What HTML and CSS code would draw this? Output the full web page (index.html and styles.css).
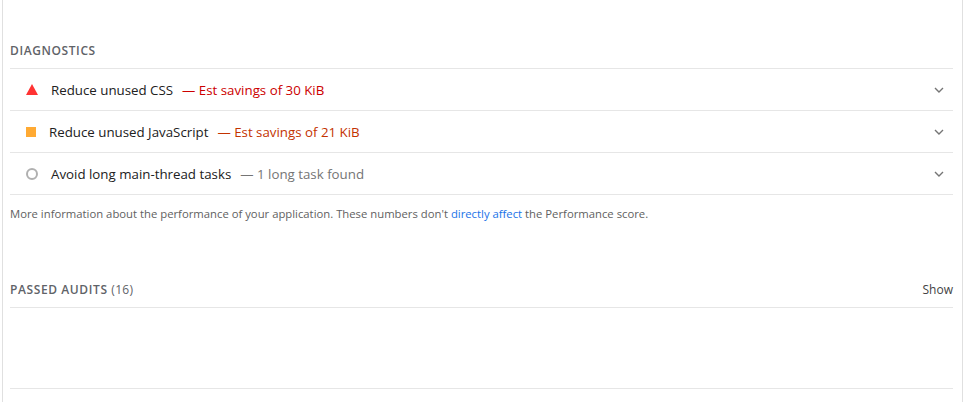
FILE: index.html
```html
<!DOCTYPE html>
<html>
<head>
<meta charset="utf-8">
<link rel="stylesheet" href="styles.css">
</head>
<body>
<div class="panel">
  <section class="group diag">
    <div class="group-header">Diagnostics</div>
    <div class="audit">
      <span class="icon"><svg width="12" height="11" viewBox="0 0 12 11"><polygon points="6,0 12,11 0,11" fill="#ff3333"/></svg></span>
      <span class="title">Reduce unused CSS</span>
      <span class="sep fail">— Est savings of 30 KiB</span>
      <span class="chev"><svg width="10" height="6" viewBox="0 0 10 6"><polyline points="1,1 5,5 9,1" fill="none" stroke="#757575" stroke-width="1.4"/></svg></span>
    </div>
    <div class="audit">
      <span class="icon icon-narrow"><span class="square"></span></span>
      <span class="title">Reduce unused JavaScript</span>
      <span class="sep avg">— Est savings of 21 KiB</span>
      <span class="chev"><svg width="10" height="6" viewBox="0 0 10 6"><polyline points="1,1 5,5 9,1" fill="none" stroke="#757575" stroke-width="1.4"/></svg></span>
    </div>
    <div class="audit">
      <span class="icon"><span class="circle"></span></span>
      <span class="title">Avoid long main-thread tasks</span>
      <span class="sep info">— 1 long task found</span>
      <span class="chev"><svg width="10" height="6" viewBox="0 0 10 6"><polyline points="1,1 5,5 9,1" fill="none" stroke="#757575" stroke-width="1.4"/></svg></span>
    </div>
    <p class="desc">More information about the performance of your application. These numbers don't <a href="#">directly affect</a> the Performance score.</p>
  </section>
  <section class="group passed">
    <div class="group-header row">
      <span>Passed audits <span class="count">(16)</span></span>
      <span class="show">Show</span>
    </div>
    <div class="empty"></div>
  </section>
</div>
</body>
</html>
```
FILE: styles.css
```css
html, body {
  margin: 0;
  padding: 0;
  background: #fff;
}
body {
  font-family: "Open Sans", "Noto Sans", sans-serif;
  color: #212121;
}
.panel {
  margin-left: 2px;
  width: 961px;
  height: 402px;
  border-left: 1px solid #e0e0e0;
  border-right: 1px solid #e0e0e0;
  box-sizing: border-box;
  padding: 39px 9px 0 7px;
}
.group-header {
  font-size: 12px;
  font-weight: 600;
  letter-spacing: 0.6px;
  text-transform: uppercase;
  color: #5f6368;
  height: 30px;
  line-height: 24px;
  border-bottom: 1px solid #e6e6e6;
  box-sizing: border-box;
}
.group-header.row {
  display: flex;
  justify-content: space-between;
}
.count {
  font-weight: 400;
  letter-spacing: 0.3px;
}
.show {
  text-transform: none;
  font-weight: 400;
  letter-spacing: 0;
  color: #424242;
}
.audit {
  display: flex;
  align-items: center;
  height: 42px;
  border-bottom: 1px solid #e6e6e6;
  box-sizing: border-box;
  font-size: 13.3px;
}
.icon {
  width: 41px;
  display: flex;
  justify-content: center;
  padding-left: 2px;
  box-sizing: border-box;
}
.icon-narrow {
  width: 39px;
  justify-content: flex-start;
  padding-left: 16px;
}
.square {
  width: 10px;
  height: 10px;
  background: #ffaa33;
}
.circle {
  width: 8px;
  height: 8px;
  border: 2px solid #b0b0b0;
  border-radius: 50%;
}
.title {
  color: #212121;
}
.sep {
  margin-left: 9px;
}
.fail { color: #cc0000; }
.avg { color: #c33300; }
.info { color: #757575; }
.chev {
  margin-left: auto;
  margin-right: 9px;
  display: flex;
}
.desc {
  margin: 0;
  padding: 11px 0 0;
  font-size: 11.3px;
  color: #616161;
  height: 72px;
}
.desc a {
  color: #1a73e8;
  text-decoration: none;
}
.empty {
  height: 80px;
  border-bottom: 1px solid #e6e6e6;
}
```
